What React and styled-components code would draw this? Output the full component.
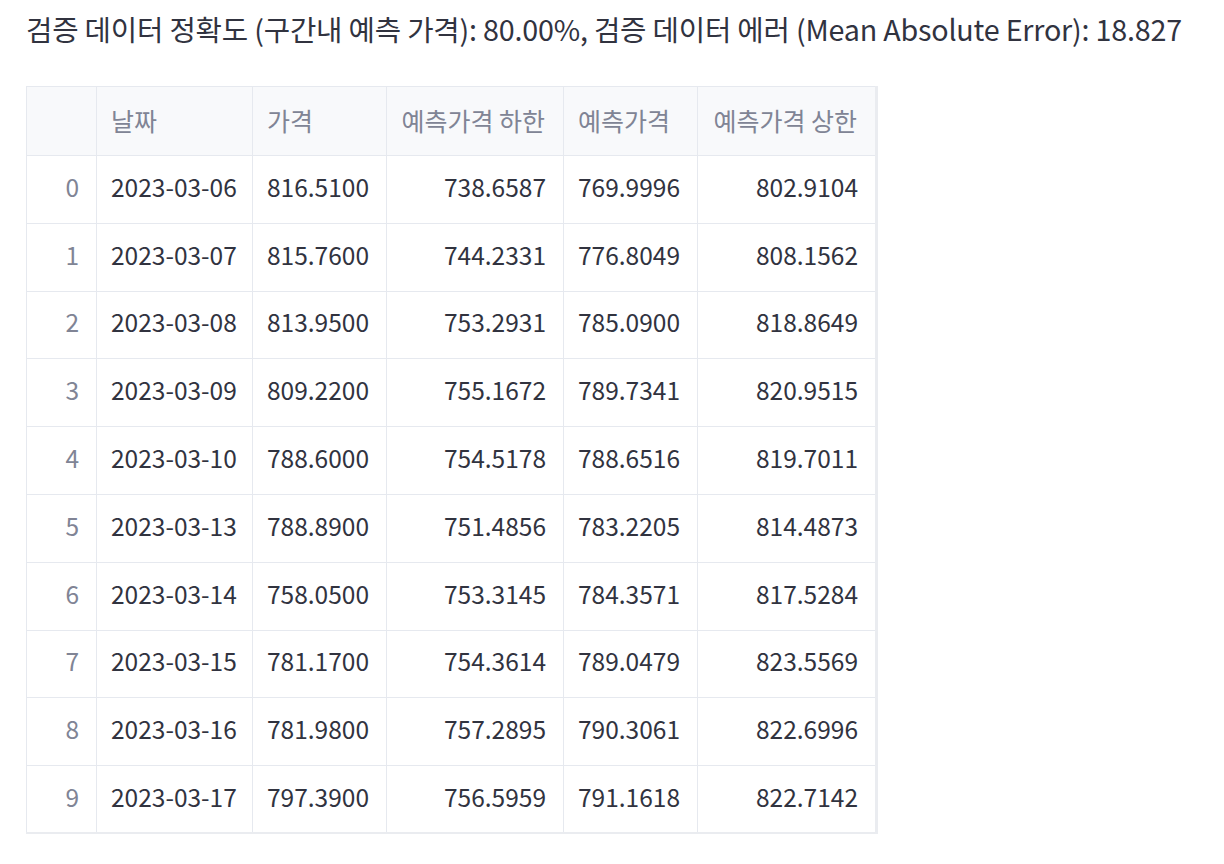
import React from "react";
import styled, { createGlobalStyle } from "styled-components";

const GlobalStyle = createGlobalStyle`
  html, body {
    margin: 0;
    padding: 0;
    background: #ffffff;
  }
  body {
    font-family: "Noto Sans CJK KR", "Noto Sans", sans-serif;
    color: #31333f;
  }
`;

const Page = styled.div`
  padding: 9px 26px 0;
`;

const Title = styled.p`
  margin: 0;
  font-size: 28.7px;
  line-height: 40px;
  color: #31333f;
  letter-spacing: -0.2px;
  white-space: nowrap;
`;

const Table = styled.table`
  margin-top: 37px;
  width: 851px;
  table-layout: fixed;
  border-collapse: collapse;
  border-top: 1px solid #e6e9ef;
  border-left: 1px solid #e6e9ef;
  border-right: 3px solid #eaecf0;
  border-bottom: 2px solid #eaecf0;
  font-size: 24.5px;
`;

const HeadCell = styled.th`
  box-sizing: border-box;
  height: 69px;
  width: ${p => p.w}px;
  padding: 0 ${p => (p.right ? 18 : 14)}px 2px 14px;
  background: #f8f9fb;
  border: 1px solid #e6e9ef;
  color: #808495;
  font-size: 25px;
  font-weight: 400;
  text-align: ${p => (p.right ? "right" : "left")};
  white-space: nowrap;
  overflow: hidden;
`;

const Cell = styled.td`
  box-sizing: border-box;
  height: 67.8px;
  padding: 0 ${p => (p.right ? 17 : 14)}px 6px 14px;
  border: 1px solid #e6e9ef;
  color: ${p => (p.index ? "#808495" : "#31333f")};
  text-align: ${p => (p.right ? "right" : "left")};
  white-space: nowrap;
  overflow: hidden;
`;

const columns = [
  { label: "", w: 70, right: true },
  { label: "날짜", w: 156 },
  { label: "가격", w: 134 },
  { label: "예측가격 하한", w: 177, right: true },
  { label: "예측가격", w: 134 },
  { label: "예측가격 상한", w: 179, right: true },
];

const rows = [
  ["2023-03-06", "816.5100", "738.6587", "769.9996", "802.9104"],
  ["2023-03-07", "815.7600", "744.2331", "776.8049", "808.1562"],
  ["2023-03-08", "813.9500", "753.2931", "785.0900", "818.8649"],
  ["2023-03-09", "809.2200", "755.1672", "789.7341", "820.9515"],
  ["2023-03-10", "788.6000", "754.5178", "788.6516", "819.7011"],
  ["2023-03-13", "788.8900", "751.4856", "783.2205", "814.4873"],
  ["2023-03-14", "758.0500", "753.3145", "784.3571", "817.5284"],
  ["2023-03-15", "781.1700", "754.3614", "789.0479", "823.5569"],
  ["2023-03-16", "781.9800", "757.2895", "790.3061", "822.6996"],
  ["2023-03-17", "797.3900", "756.5959", "791.1618", "822.7142"],
];

export default function App() {
  return (
    <>
      <GlobalStyle />
      <Page>
        <Title>
          검증 데이터 정확도 (구간내 예측 가격): 80.00%, 검증 데이터 에러 (Mean Absolute Error): 18.827
        </Title>
        <Table>
          <thead>
            <tr>
              {columns.map((c, i) => (
                <HeadCell key={i} w={c.w} right={c.right}>
                  {c.label}
                </HeadCell>
              ))}
            </tr>
          </thead>
          <tbody>
            {rows.map((r, i) => (
              <tr key={i}>
                <Cell index right>
                  {i}
                </Cell>
                {r.map((v, j) => (
                  <Cell key={j} right={columns[j + 1].right}>
                    {v}
                  </Cell>
                ))}
              </tr>
            ))}
          </tbody>
        </Table>
      </Page>
    </>
  );
}
